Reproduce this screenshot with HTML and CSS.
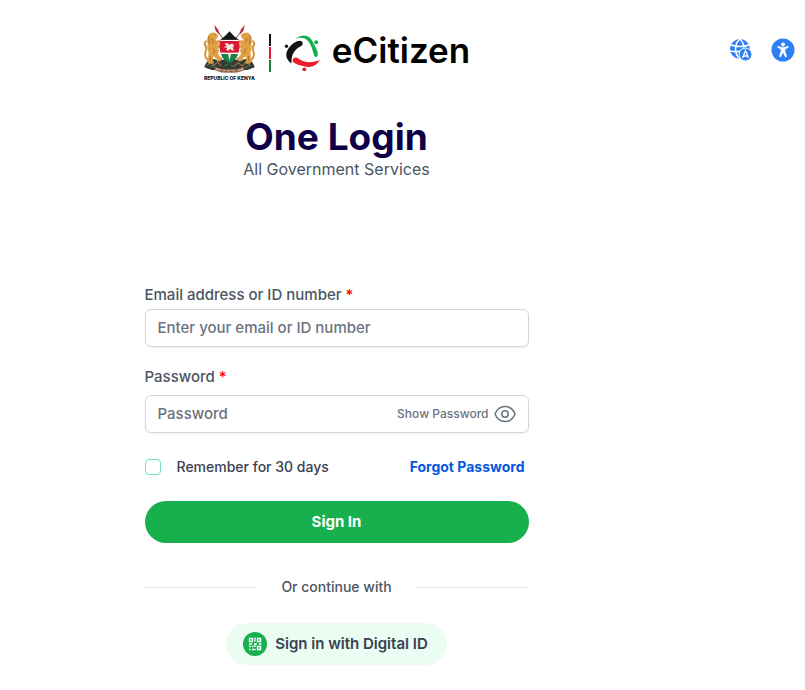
FILE: index.html
```html
<!DOCTYPE html>
<html lang="en">
<head>
    <meta charset="UTF-8">
    <meta name="viewport" content="width=device-width, initial-scale=1.0">
    <title>eCitizen - One Login</title>
    <link rel="stylesheet" href="styles.css">
</head>
<body>
    <div class="page">
        <main class="login">
            <header class="brand">
                <!-- coat of arms -->
                <svg class="crest" viewBox="12 15 160 168" role="img" aria-label="Republic of Kenya">
                    <path d="M50 24 L128 132 M134 24 L56 132" stroke="#8c4a4a" stroke-width="3"/>
                    <path d="M46 14 L50 32 L61 44 L58 29 Z M138 14 L134 32 L123 44 L126 29 Z" fill="#b5283c"/>
                    <path d="M16 142 Q20 122 40 116 L64 122 L92 112 L120 122 L144 116 Q164 122 168 142 L146 150 L38 150 Z" fill="#343a31"/>
                    <path d="M24 136 l12 -8 l8 10 l12 -12 l12 12 M106 138 l12 -10 l12 10 l12 -12 l14 12" fill="none" stroke="#8d6a49" stroke-width="4"/>
                    <path d="M32 142 l10 -5 M76 138 l12 -5 M94 136 l12 4 M138 143 l12 -5" stroke="#39704a" stroke-width="4"/>
                    <g id="lion">
                        <path d="M29 44 Q36 34 48 38 L57 45 L56 54 L50 56 L53 62 L66 58 L68 65 L56 73 L66 75 L68 83 L57 83 Q63 93 57 101 L67 115 L63 125 L53 123 L54 117 L43 109 L41 120 L46 131 L28 131 L27 116 L29 99 Q23 83 26 70 Q22 56 29 44 Z" fill="#e0a044"/>
                        <path d="M27 121 Q14 108 20 94 Q24 84 19 76 Q14 68 23 62" fill="none" stroke="#d4933a" stroke-width="6"/>
                        <path d="M31 48 Q27 60 33 72 M40 54 Q39 62 44 70 M42 85 Q49 92 46 101 M48 43 l4 3 M35 108 l-1 16" fill="none" stroke="#94591f" stroke-width="2"/>
                    </g>
                    <use href="#lion" transform="translate(184 0) scale(-1 1)"/>
                    <path d="M92 33 Q106 49 120 60 L64 60 Q78 49 92 33 Z" fill="#16191a"/>
                    <path d="M64 62 L120 62 Q125 82 119 98 L65 98 Q59 82 64 62 Z" fill="#d71930"/>
                    <path d="M66 102 L118 102 Q111 120 92 131 Q73 120 66 102 Z" fill="#178045"/>
                    <path d="M64 61 H120 M65 100 H119" stroke="#fff" stroke-width="3"/>
                    <path d="M87 101 L97 101 L92 122 Z" fill="#f4dfdf"/>
                    <path d="M77 71 L86 69 L90 74 L100 70 L106 76 L102 83 L106 92 L98 91 L94 86 L88 93 L82 90 L85 83 L75 82 L83 77 Z" fill="#f7e6e6"/>
                    <path d="M49 141 Q69 151 92 148 Q115 151 135 141 L136 150 Q115 160 92 157 Q69 160 48 150 Z" fill="#c9a37b" stroke="#6d4632" stroke-width="2"/>
                    <path d="M64 152 l10 2 m4 0 h8 m5 0 h10 m5 0 l12 -2" stroke="#63452f" stroke-width="3"/>
                    <text class="crest-text" x="92" y="181" text-anchor="middle">REPUBLIC OF KENYA</text>
                </svg>
                <span class="flag-bar"><i class="black"></i><i class="red"></i><i class="green"></i></span>
                <svg class="mark" viewBox="60 28 108 112" aria-hidden="true">
                    <circle cx="67" cy="62" r="5" fill="#111"/>
                    <circle cx="157" cy="50" r="6" fill="#12a84b"/>
                    <circle cx="121" cy="132" r="6" fill="#ec2028"/>
                    <path d="M114 48 Q120 58 109 63 C94 71 81 84 82 114 C63 100 63 82 74 67 C87 50 106 40 114 48 Z" fill="#111"/>
                    <path d="M94 40 C116 22 137 28 146 47 C152 61 165 78 161 91 Q157 99 151 91 C146 74 143 59 133 47 C123 36 110 34 94 40 Z" fill="#12b04d"/>
                    <path d="M89 98 Q95 94 103 99 C121 112 143 114 168 104 C157 122 143 127 127 124 C109 120 92 116 86 108 Q84 101 89 98 Z" fill="#ec2028"/>
                </svg>
                <span class="brand-name">eCitizen</span>
            </header>

            <h1>One Login</h1>
            <p class="subtitle">All Government Services</p>

            <form class="form">
                <div class="field">
                    <label for="email">Email address or ID number <span class="required">*</span></label>
                    <div class="control">
                        <input type="text" id="email" placeholder="Enter your email or ID number">
                    </div>
                </div>
                <div class="field password">
                    <label for="password">Password <span class="required">*</span></label>
                    <div class="control">
                        <input type="password" id="password" placeholder="Password">
                        <button type="button" class="show-password" id="toggle">
                            <span>Show Password</span>
                            <svg viewBox="0 0 22 18" width="22" height="18" fill="none" stroke="currentColor" stroke-width="1.5">
                                <path d="M1 9 C3 4 6.5 1.500 11 1.500 S19 4 21 9 C19 14 15.500 16.500 11 16.500 S3 14 1 9 Z"/>
                                <circle cx="11" cy="9" r="3.200"/>
                            </svg>
                        </button>
                    </div>
                </div>
                <div class="options">
                    <label class="remember"><input type="checkbox"> Remember for 30 days</label>
                    <a href="#">Forgot Password</a>
                </div>
                <button type="submit" class="sign-in">Sign In</button>
                <div class="divider">Or continue with</div>
                <button type="button" class="digital-id">
                    <svg viewBox="0 0 24 24" width="24" height="24" aria-hidden="true">
                        <circle cx="12" cy="12" r="12" fill="#17b04d"/>
                        <path d="M6.500 6.500 h3 v3 h-3 Z M14.500 6.500 h3 v3 h-3 Z M14.500 14.500 h3 v3 h-3 Z" fill="none" stroke="#fff" stroke-width="1.400"/>
                        <path d="M12 5.500 v4 M6 12 h3 M11 12 h3 M16 12 h2.500 M12 12 v3 M6 14.500 h2 M9 14.500 h1.500 M6 17.500 h1.500 M9 17.500 h3.500" fill="none" stroke="#fff" stroke-width="1.300"/>
                    </svg>
                    Sign in with Digital ID
                </button>
            </form>
        </main>

        <aside class="tools">
            <button type="button" aria-label="Change language">
                <svg viewBox="0 0 22 22" width="22" height="22">
                    <circle cx="10" cy="10" r="10" fill="#2f80f5"/>
                    <path d="M10 0 C4 5 4 15 10 20 M10 0 C13 3 14 6 14 10 M1 6 Q10 9 19 6 M0 12 Q8 14 14 11" fill="none" stroke="#fff" stroke-width="1.500"/>
                    <circle cx="15.500" cy="15.500" r="6.500" fill="#2f80f5" stroke="#fff" stroke-width="1"/>
                    <path d="M12.500 19 L15.500 11.500 L18.500 19 M13.500 17 H17.500" fill="none" stroke="#fff" stroke-width="1.300"/>
                </svg>
            </button>
            <button type="button" aria-label="Accessibility">
                <svg viewBox="0 0 24 24" width="24" height="24">
                    <circle cx="12" cy="12" r="11.500" fill="#2f80f5"/>
                    <circle cx="12" cy="6.500" r="2" fill="#fff"/>
                    <path d="M7 7.800 L10.500 9.200 H13.500 L17 7.800 L17.600 9.500 L14.300 11.300 V13.500 L16 18.600 L14.300 19.300 L12 14.800 L9.700 19.300 L8 18.600 L9.700 13.500 V11.300 L6.400 9.500 Z" fill="#fff"/>
                </svg>
            </button>
        </aside>
    </div>
    <script>
        const password = document.getElementById('password');
        document.getElementById('toggle').addEventListener('click', function () {
            password.type = password.type === 'password' ? 'text' : 'password';
        });
    </script>
</body>
</html>
```
FILE: styles.css
```css
* {
    box-sizing: border-box;
}

body {
    margin: 0;
    background-color: #fff;
    font-family: Inter, "Open Sans", sans-serif;
    font-size: 14px;
    line-height: 20px;
    font-weight: 500;
    color: #4b5563;
}

button,
input {
    font: inherit;
}

button {
    border: none;
    background: none;
    padding: 0;
    cursor: pointer;
}

svg {
    display: block;
    flex-shrink: 0;
}

.page {
    display: flex;
}

.login {
    flex: 1;
    display: flex;
    flex-direction: column;
    align-items: center;
    padding: 24px 16px;
}

.tools {
    display: flex;
    justify-content: flex-end;
    align-items: flex-start;
    gap: 19px;
    padding: 38px 10px 0 57px;
}

.tools button {
    display: flex;
    align-items: center;
    height: 24px;
}

.brand {
    display: flex;
    align-items: center;
    height: 58px;
}

.crest {
    width: 53px;
    height: 56px;
}

.crest-text {
    font-size: 15px;
    font-weight: 800;
    fill: #111;
}

.flag-bar {
    display: flex;
    flex-direction: column;
    gap: 1px;
    width: 2px;
    margin: 0 13px;
}

.flag-bar i {
    height: 12px;
}

.black {
    background-color: #111;
}

.red {
    background-color: #e11d35;
}

.green {
    background-color: #15803d;
}

.mark {
    width: 36px;
    height: 37px;
}

.brand-name {
    margin-left: 12px;
    padding-bottom: 6px;
    font-size: 35px;
    line-height: 40px;
    font-weight: 600;
    color: #000;
}

h1 {
    margin: 35px 0 0;
    font-size: 37px;
    line-height: 40px;
    font-weight: 700;
    color: #0f0147;
}

.subtitle {
    margin: 0;
    font-size: 16px;
    line-height: 24px;
    font-weight: 400;
}

.form {
    width: 100%;
    max-width: 384px;
    margin-top: 104px;
    display: flex;
    flex-direction: column;
}

.field {
    margin-bottom: 20px;
    font-size: 15px;
}

.field label {
    display: block;
    margin-bottom: 4px;
}

.password label {
    margin-bottom: 8px;
}

.required {
    color: #f00;
}

.control {
    display: flex;
    align-items: center;
    height: 38px;
    padding: 0 12px;
    border: 1px solid #d1d5db;
    border-radius: 6px;
    box-shadow: 0 1px 2px rgba(0, 0, 0, 0.05);
}

.control input {
    flex: 1;
    min-width: 0;
    padding: 0;
    border: none;
    outline: none;
    background: none;
    color: #374151;
}

.control input::placeholder {
    color: #6b7280;
    opacity: 1;
}

.show-password {
    display: flex;
    align-items: center;
    gap: 5px;
    font-size: 12px;
    color: #6b7280;
}

.options {
    display: flex;
    justify-content: space-between;
    align-items: center;
    margin: 4px 4px 24px 0;
}

.remember {
    display: flex;
    align-items: center;
    gap: 16px;
    color: #374151;
}

.remember input {
    appearance: none;
    width: 16px;
    height: 16px;
    margin: 0;
    border: 1px solid #6ee7b7;
    border-radius: 4px;
}

.remember input:checked {
    background-color: #17b04d;
}

.options a {
    font-weight: 700;
    color: #0757df;
    text-decoration: none;
}

.sign-in {
    height: 42px;
    border-radius: 21px;
    background-color: #17b04d;
    color: #fff;
    font-size: 15px;
    font-weight: 700;
}

.divider {
    display: flex;
    align-items: center;
    gap: 24px;
    margin: 34px 0 26px;
}

.divider::before,
.divider::after {
    content: "";
    flex: 1;
    height: 1px;
    background-color: #e5e7eb;
}

.digital-id {
    display: flex;
    align-items: center;
    align-self: center;
    gap: 8px;
    height: 42px;
    padding: 0 19px 0 17px;
    border-radius: 21px;
    background-color: #ebfdf3;
    color: #374151;
    font-size: 15px;
    font-weight: 600;
}
```
